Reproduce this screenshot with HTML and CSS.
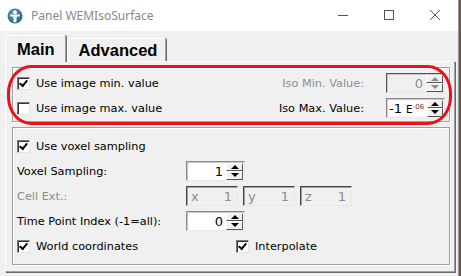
FILE: index.html
```html
<!DOCTYPE html>
<html lang="en">
<head>
  <meta charset="UTF-8">
  <title>Panel WEMIsoSurface</title>
  <link rel="stylesheet" href="styles.css">
</head>
<body>

  <div class="window">
    <!-- Title bar -->
    <div class="titlebar">
      <svg class="app-icon" width="16" height="16" viewBox="0 0 16 16">
        <defs>
          <radialGradient id="ico" cx="40%" cy="35%" r="70%">
            <stop offset="0" stop-color="#5aa3bb"/>
            <stop offset="1" stop-color="#1f6580"/>
          </radialGradient>
        </defs>
        <circle cx="8" cy="8" r="7.5" fill="url(#ico)"/>
        <circle cx="8" cy="4.2" r="1.9" fill="#fff"/>
        <path d="M3 6.4 L13 6.4 L12.4 8.4 L9.6 8.6 L9.4 14.2 L6.6 14.2 L6.4 8.6 L3.6 8.4 Z" fill="#fff"/>
      </svg>
      <span class="title">Panel WEMIsoSurface</span>
      <div class="win-controls">
        <svg width="46" height="31" viewBox="0 0 46 31"><line x1="18" y1="15.5" x2="28" y2="15.5" stroke="#555" stroke-width="1"/></svg>
        <svg width="46" height="31" viewBox="0 0 46 31"><rect x="18.5" y="10.5" width="9" height="9" fill="none" stroke="#555" stroke-width="1"/></svg>
        <svg width="46" height="31" viewBox="0 0 46 31"><path d="M18 10 L28 20 M28 10 L18 20" stroke="#555" stroke-width="1"/></svg>
      </div>
    </div>

    <div class="client">
      <div class="tabs">
        <div class="tab active">Main</div>
        <div class="tab">Advanced</div>
      </div>

      <div class="pane">
        <!-- red marker drawn over the first group -->
        <div class="annotation"></div>

        <div class="group group-iso">
          <div class="row">
            <label class="check"><span class="box checked"></span>Use image min. value</label>
            <span class="label disabled">Iso Min. Value:</span>
            <div class="spin disabled">
              <span class="spin-value">0</span>
              <span class="spin-buttons"><span class="up"></span><span class="down"></span></span>
            </div>
          </div>
          <div class="row">
            <label class="check"><span class="box"></span>Use image max. value</label>
            <span class="label">Iso Max. Value:</span>
            <div class="spin">
              <span class="spin-value">-1 <span class="exp">E<sup>-06</sup></span></span>
              <span class="spin-buttons"><span class="up"></span><span class="down"></span></span>
            </div>
          </div>
        </div>

        <div class="group group-voxel">
          <label class="check full"><span class="box checked"></span>Use voxel sampling</label>

          <span class="label">Voxel Sampling:</span>
          <div class="spin">
            <span class="spin-value">1</span>
            <span class="spin-buttons"><span class="up"></span><span class="down"></span></span>
          </div>

          <span class="label disabled">Cell Ext.:</span>
          <div class="ext-fields">
            <div class="field"><span>x</span><span>1</span></div>
            <div class="field"><span>y</span><span>1</span></div>
            <div class="field"><span>z</span><span>1</span></div>
          </div>

          <span class="label">Time Point Index (-1=all):</span>
          <div class="spin">
            <span class="spin-value">0</span>
            <span class="spin-buttons"><span class="up"></span><span class="down"></span></span>
          </div>

          <label class="check"><span class="box checked"></span>World coordinates</label>
          <label class="check interp"><span class="box checked"></span>Interpolate</label>
        </div>
      </div>
    </div>
  </div>

</body>
</html>
```

FILE: styles.css
```css
/* General Styles */
body {
  margin: 0;
  width: 461px;
  height: 276px;
  overflow: hidden;
  background-color: #6a5838;
  font-family: "DejaVu Sans", sans-serif;
  font-size: 11.3px;
  color: #000;
}

.window {
  width: 458px;
  height: 276px;
  background-color: #f0f0f0;
  border-right: 1px solid #9a9a9a;
}

/* Title bar */
.titlebar {
  height: 31px;
  background-color: #fff;
  display: flex;
  align-items: center;
}

.app-icon {
  margin-left: 7px;
  margin-right: 8px;
}

.title {
  font-family: "Noto Sans", sans-serif;
  font-size: 12px;
  color: #8a8a8a;
  flex: 1;
}

.win-controls {
  display: flex;
}

.win-controls svg {
  display: block;
}

/* Client area */
.client {
  padding: 4px 0 0 5px;
}

.tabs {
  display: flex;
  align-items: flex-end;
  height: 26px;
}

.tab {
  font-family: "Liberation Sans", sans-serif;
  font-weight: bold;
  font-size: 16.5px;
  height: 22px;
  line-height: 22px;
  padding: 0 8px 0 11px;
  border-top: 1px solid #fff;
  border-left: 1px solid #fff;
  border-right: 1px solid #a0a0a0;
  box-shadow: 1px 0 0 #696969;
  border-radius: 2px 2px 0 0;
  margin-right: 1px;
}

.tab.active {
  height: 26px;
  line-height: 27px;
  padding-right: 10px;
  margin-bottom: -1px;
  background-color: #f0f0f0;
  position: relative;
  z-index: 1;
}

.pane {
  position: relative;
  width: 438px;
  height: 198px;
  border-top: 1px solid #fff;
  border-left: 1px solid #fff;
  border-right: 1px solid #a0a0a0;
  border-bottom: 1px solid #a0a0a0;
  box-shadow: 1px 1px 0 #696969;
  padding: 5px 4px 6px 6px;
  display: flex;
  flex-direction: column;
  gap: 5px;
}

.annotation {
  position: absolute;
  left: 1px;
  top: 3px;
  width: 439px;
  height: 54px;
  border: 3px solid #e8121b;
  border-radius: 24px / 28px;
  pointer-events: none;
  z-index: 2;
}

/* Group boxes */
.group {
  border: 1px solid #a0a0a0;
  box-shadow: inset 1px 1px 0 #fff, 1px 1px 0 #fff;
}

.group-iso {
  padding: 5px 4px 3px 4px;
  display: flex;
  flex-direction: column;
  gap: 5px;
}

.group-iso .row {
  display: grid;
  grid-template-columns: 1fr auto 59px;
  column-gap: 22px;
  align-items: center;
  height: 20px;
}

.group-voxel {
  flex: 1;
  padding: 8px 4px 4px 4px;
  display: grid;
  grid-template-columns: 169px 1fr;
  grid-auto-rows: 20px;
  row-gap: 5px;
  align-items: center;
}

.check.full {
  grid-column: 1 / 3;
}

.check.interp {
  margin-left: 50px;
}

.label.disabled {
  color: #8d8d8d;
}

/* Checkboxes */
.check {
  display: flex;
  align-items: center;
  gap: 6px;
  white-space: nowrap;
}

.box {
  width: 11px;
  height: 11px;
  background-color: #fff;
  border: 1px solid;
  border-color: #7a7a7a #e3e3e3 #e3e3e3 #7a7a7a;
  box-shadow: inset 1px 1px 0 #333;
  position: relative;
}

.box.checked::after {
  content: "";
  position: absolute;
  left: 2px;
  top: 1px;
  width: 3px;
  height: 6px;
  border-right: 2px solid #000;
  border-bottom: 2px solid #000;
  transform: translate(1px, -0.5px) rotate(40deg);
}

/* Spin boxes */
.spin {
  width: 59px;
  height: 20px;
  box-sizing: border-box;
  background-color: #fff;
  border: 1px solid;
  border-color: #8a8a8a #e8e8e8 #e8e8e8 #8a8a8a;
  box-shadow: inset 1px 1px 0 #c8c8c8;
  display: flex;
  align-items: center;
  padding: 1px 1px 1px 2px;
}

.spin.disabled {
  background-color: #f0f0f0;
  border-color: #555 #e8e8e8 #e8e8e8 #555;
  color: #8d8d8d;
}

.spin-value {
  flex: 1;
  text-align: right;
  padding-right: 3px;
  font-size: 13px;
  white-space: nowrap;
}

.spin-value .exp {
  font-size: 10.5px;
}

.spin-value sup {
  font-size: 7px;
  color: #7a2f2f;
  vertical-align: 4px;
}

.spin-buttons {
  width: 17px;
  height: 17px;
  display: flex;
  flex-direction: column;
}

.spin-buttons span {
  flex: 1;
  background-color: #f0f0f0;
  border-top: 1px solid #fff;
  border-left: 1px solid #fff;
  border-bottom: 1px solid #555;
  border-right: 1px solid #555;
  display: flex;
  align-items: center;
  justify-content: center;
}

.spin-buttons .up::before {
  content: "";
  border-left: 4px solid transparent;
  border-right: 4px solid transparent;
  border-bottom: 4px solid #000;
}

.spin-buttons .down::before {
  content: "";
  border-left: 4px solid transparent;
  border-right: 4px solid transparent;
  border-top: 4px solid #000;
}

.spin.disabled .spin-buttons .up::before {
  border-bottom-color: #8d8d8d;
}

.spin.disabled .spin-buttons .down::before {
  border-top-color: #8d8d8d;
}

/* Cell extent fields */
.ext-fields {
  display: flex;
  gap: 5px;
}

.field {
  width: 52px;
  height: 20px;
  box-sizing: border-box;
  border: 1px solid;
  border-color: #444 #e8e8e8 #e8e8e8 #444;
  box-shadow: inset 1px 1px 0 #a0a0a0;
  display: flex;
  justify-content: space-between;
  align-items: center;
  padding: 0 5px 0 4px;
  color: #8d8d8d;
  font-size: 13px;
}
```
